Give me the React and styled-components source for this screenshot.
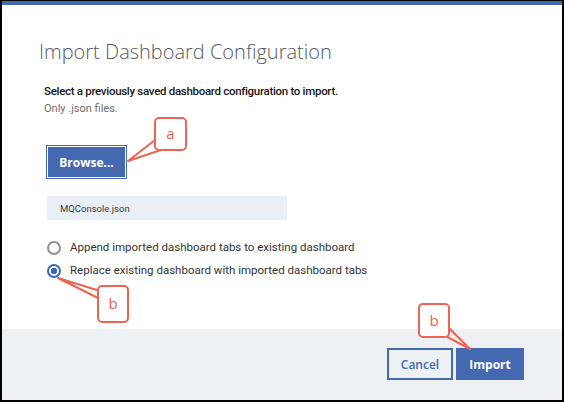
import React from 'react';
import styled, {createGlobalStyle} from 'styled-components';

const Global = createGlobalStyle`
  html, body { margin: 0; padding: 0; background: #fff; }
  body { font-family: Roboto, "Open Sans", sans-serif; }
  * { box-sizing: border-box; }
`

const BLUE = '#4569b1';
const RED = '#ec6454';

function Callout({label, box, tip, width, height}) {
  // box: [x, y, w, h] in local coords, tip: polylines from box to target
  const [x, y, w, h] = box;
  return (
    <CalloutSvg width={width} height={height}>
      {tip.map((t, i) => (
        <polyline key={i} points={t} fill="none" stroke={RED} strokeWidth="2" strokeLinejoin="round" />
      ))}
      <rect x={x} y={y} width={w} height={h} rx="4" fill="#fff" stroke={RED} strokeWidth="2" />
      <text x={x + w / 2} y={y + h / 2 + 5} textAnchor="middle" fill={RED}
        fontFamily="Open Sans, sans-serif" fontWeight="400" fontSize="15">{label}</text>
    </CalloutSvg>
  )
}

export default function App() {
  return (
    <>
      <Global />
      <Frame>
        <Body>
          <Title>Import Dashboard Configuration</Title>
          <Lead>Select a previously saved dashboard configuration to import.</Lead>
          <Hint>Only .json files.</Hint>
          <BrowseRow>
            <FocusRing>
              <BrowseButton>Browse...</BrowseButton>
            </FocusRing>
            <CalloutA>
              <Callout label="a" width={70} height={50}
                box={[36, 1, 31, 32]}
                tip={["36,23 9,44 42,33"]} />
            </CalloutA>
          </BrowseRow>
          <FileField>MQConsole.json</FileField>
          <Options>
            <Option>
              <Radio />
              <span>Append imported dashboard tabs to existing dashboard</span>
            </Option>
            <Option>
              <Radio checked />
              <span>Replace existing dashboard with imported dashboard tabs</span>
              <CalloutB>
                <Callout label="b" width={80} height={62}
                  box={[47, 23, 30, 36]}
                  tip={["49,28 7,15 49,36"]} />
              </CalloutB>
            </Option>
          </Options>
        </Body>
        <Footer>
          <Ghost>Cancel</Ghost>
          <Primary>
            Import
            <CalloutC>
              <Callout label="b" width={60} height={50}
                box={[1, 1, 30, 33]}
                tip={["22,30 52,46 30,24"]} />
            </CalloutC>
          </Primary>
        </Footer>
      </Frame>
    </>
  )
}

const Frame = styled.div`
  width: 564px;
  height: 402px;
  display: flex;
  flex-direction: column;
  border-left: 2px solid #000;
  border-right: 2px solid #000;
  border-bottom: 2px solid #000;
  border-top: 1px solid #000;
  box-shadow: inset 0 4px 0 ${BLUE};
  background: #fff;
`
const Body = styled.div`
  flex: 1;
  padding: 37px 0 0 42px;
  display: flex;
  flex-direction: column;
`
const Title = styled.h1`
  margin: 0 0 0 -5px;
  font-family: "Open Sans", sans-serif;
  font-weight: 300;
  font-size: 20px;
  line-height: 28px;
  color: #555a60;
`
const Lead = styled.div`
  margin-top: 17px;
  font-size: 11.5px;
  font-weight: 500;
  letter-spacing: -0.3px;
  line-height: 16px;
  color: #171717;
`
const Hint = styled.div`
  margin-top: 2px;
  font-size: 11px;
  line-height: 16px;
  color: #6f6f6f;
`
const BrowseRow = styled.div`
  position: relative;
  margin-top: 28px;
  height: 34px;
  display: flex;
  align-items: flex-start;
`
const FocusRing = styled.div`
  margin-left: 2px;
  padding: 1px;
  border: 1px solid ${BLUE};
  display: flex;
`
const BrowseButton = styled.button`
  width: 77px;
  height: 30px;
  border: none;
  background: ${BLUE};
  color: #fff;
  font-family: "Open Sans", sans-serif;
  font-weight: 700;
  font-size: 12px;
  padding: 0;
`
const CalloutSvg = styled.svg`
  display: block;
  overflow: visible;
`
const CalloutA = styled.div`
  position: absolute;
  left: 75px;
  top: -28px;
`
const FileField = styled.div`
  margin-top: 17px;
  margin-left: 3px;
  width: 240px;
  height: 24px;
  background: #eaeff6;
  padding-left: 13px;
  display: flex;
  align-items: center;
  font-size: 9.5px;
  color: #3a3a3a;
`
const Options = styled.div`
  margin-top: 20px;
  margin-left: 3px;
  display: flex;
  flex-direction: column;
  gap: 8px;
`
const Option = styled.label`
  position: relative;
  display: flex;
  align-items: center;
  gap: 9px;
  font-size: 11.5px;
  line-height: 15px;
  color: #333;
`
const Radio = styled.span`
  width: 14px;
  height: 14px;
  border-radius: 50%;
  border: 2px solid ${p => p.checked ? '#3a68b8' : '#8d9196'};
  background: ${p => p.checked ? 'radial-gradient(circle, #3a68b8 0 3px, #fff 3.5px)' : '#fff'};
`
const CalloutB = styled.div`
  position: absolute;
  left: 4px;
  top: 0px;
`
const Footer = styled.div`
  height: 71px;
  background: #eef1f4;
  display: flex;
  justify-content: flex-end;
  align-items: flex-start;
  padding: 19px 38px 0 0;
  gap: 3px;
`
const Ghost = styled.button`
  width: 66px;
  height: 32px;
  border: 2px solid ${BLUE};
  background: #eef1f4;
  color: ${BLUE};
  font-family: "Open Sans", sans-serif;
  font-weight: 600;
  font-size: 12px;
  padding: 0;
`
const Primary = styled(Ghost)`
  position: relative;
  width: 68px;
  border: none;
  background: ${BLUE};
  color: #fff;
  font-weight: 700;
`
const CalloutC = styled.div`
  position: absolute;
  left: -38px;
  top: -45px;
`
